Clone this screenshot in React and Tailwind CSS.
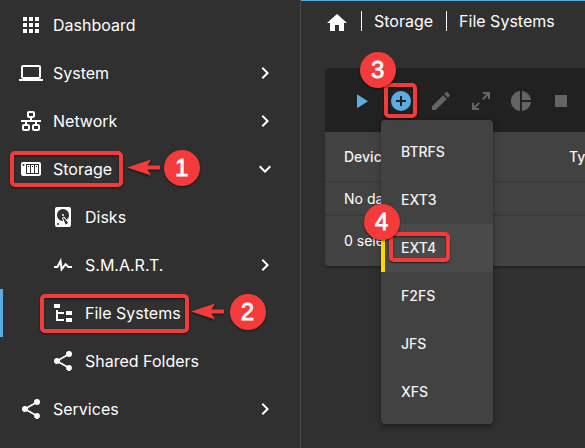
import React from "react";

const paths = {
  apps: "M16,20H20V16H16M16,14H20V10H16M10,8H14V4H10M16,8H20V4H16M10,14H14V10H10M4,14H8V10H4M4,20H8V16H4M10,20H14V16H10M4,8H8V4H4V8Z",
  laptop: "M4,6H20V16H4M20,18A2,2 0 0,0 22,16V6C22,4.89 21.1,4 20,4H4C2.89,4 2,4.89 2,6V16A2,2 0 0,0 4,18H0V20H24V18H20Z",
  lan: "M10,2C8.89,2 8,2.89 8,4V7C8,8.11 8.89,9 10,9H11V11H2V13H6V15H5C3.89,15 3,15.89 3,17V20C3,21.11 3.89,22 5,22H9C10.11,22 11,21.11 11,20V17C11,15.89 10.11,15 9,15H8V13H16V15H15C13.89,15 13,15.89 13,17V20C13,21.11 13.89,22 15,22H19C20.11,22 21,21.11 21,20V17C21,15.89 20.11,15 19,15H18V13H22V11H13V9H14C15.11,9 16,8.11 16,7V4C16,2.89 15.11,2 14,2H10M10,4H14V7H10V4M5,17H9V20H5V17M15,17H19V20H15V17Z",
  nas: "M4,5C2.89,5 2,5.89 2,7V17C2,18.11 2.89,19 4,19H20C21.11,19 22,18.11 22,17V7C22,5.89 21.11,5 20,5H4M4.5,7A1,1 0 0,1 5.5,8A1,1 0 0,1 4.5,9A1,1 0 0,1 3.5,8A1,1 0 0,1 4.5,7M7,7H20V17H7V7M8,8V16H11V8H8M12,8V16H15V8H12M16,8V16H19V8H16M9,9H10V10H9V9M13,9H14V10H13V9M17,9H18V10H17V9Z",
  disk: "M6,2H18A2,2 0 0,1 20,4V20A2,2 0 0,1 18,22H6A2,2 0 0,1 4,20V4A2,2 0 0,1 6,2M12,4A6,6 0 0,0 6,10C6,13.31 8.69,16 12.1,16L11.22,13.77C10.95,13.29 11.11,12.68 11.59,12.4L12.45,11.9C12.93,11.63 13.54,11.79 13.82,12.27L15.74,14.69C17.12,13.59 18,11.9 18,10A6,6 0 0,0 12,4M12,9A1,1 0 0,1 13,10A1,1 0 0,1 12,11A1,1 0 0,1 11,10A1,1 0 0,1 12,9M7,18A1,1 0 0,0 6,19A1,1 0 0,0 7,20A1,1 0 0,0 8,19A1,1 0 0,0 7,18M12.09,13.27L14.58,19.58L17.17,18.08L12.95,12.77L12.09,13.27Z",
  pulse: "M3,13H5.79L10.1,4.79L11.28,13.75L14.5,9.66L17.83,13H21V15H17L14.67,12.67L9.92,18.73L8.94,11.31L7,15H3V13Z",
  tree: "M3,3H9V7H3V3M15,10H21V14H15V10M15,17H21V21H15V17M13,13H7V18H13V20H7L5,20V9H7V11H13V13Z",
  share: "M18,16.08C17.24,16.08 16.56,16.38 16.04,16.85L8.91,12.7C8.96,12.47 9,12.24 9,12C9,11.76 8.96,11.53 8.91,11.3L15.96,7.19C16.5,7.69 17.21,8 18,8A3,3 0 0,0 21,5A3,3 0 0,0 18,2A3,3 0 0,0 15,5C15,5.24 15.04,5.47 15.09,5.7L8.04,9.81C7.5,9.31 6.79,9 6,9A3,3 0 0,0 3,12A3,3 0 0,0 6,15C6.79,15 7.5,14.69 8.04,14.19L15.16,18.34C15.11,18.55 15.08,18.77 15.08,19C15.08,20.61 16.39,21.91 18,21.91C19.61,21.91 20.92,20.61 20.92,19A2.92,2.92 0 0,0 18,16.08Z",
  right: "M8.59,16.58L13.17,12L8.59,7.41L10,6L16,12L10,18L8.59,16.58Z",
  down: "M7.41,8.58L12,13.17L16.59,8.58L18,10L12,16L6,10L7.41,8.58Z",
  home: "M10,20V14H14V20H19V12H22L12,3L2,12H5V20H10Z",
  play: "M8,5.14V19.14L19,12.14L8,5.14Z",
  plus: "M17,13H13V17H11V13H7V11H11V7H13V11H17M12,2A10,10 0 0,0 2,12A10,10 0 0,0 12,22A10,10 0 0,0 22,12A10,10 0 0,0 12,2Z",
  pencil: "M20.71,7.04C21.1,6.65 21.1,6 20.71,5.63L18.37,3.29C18,2.9 17.35,2.9 16.96,3.29L15.12,5.12L18.87,8.87M3,17.25V21H6.75L17.81,9.93L14.06,6.18L3,17.25Z",
  expand: "M10,21V19H6.41L10.91,14.5L9.5,13.09L5,17.59V14H3V21H10M14.5,10.91L19,6.41V10H21V3H14V5H17.59L13.09,9.5L14.5,10.91Z",
  pie: "M11,2V22C5.9,21.5 2,17.2 2,12C2,6.8 5.9,2.5 11,2M13,2V11H22C21.5,6.2 17.8,2.5 13,2M13,13V22C17.7,21.5 21.5,17.8 22,13H13Z",
  stop: "M18,18H6V6H18V18Z",
};

function Icon({ name, className = "" }) {
  return (
    <svg viewBox="0 0 24 24" fill="currentColor" className={`size-6 shrink-0 ${className}`}>
      <path d={paths[name]} />
    </svg>
  );
}

const nav = [
  { label: "Dashboard", icon: "apps" },
  { label: "System", icon: "laptop", chevron: "right" },
  { label: "Network", icon: "lan", chevron: "right" },
  { label: "Storage", icon: "nas", chevron: "down" },
  { label: "Disks", icon: "disk", nested: true },
  { label: "S.M.A.R.T.", icon: "pulse", nested: true, chevron: "right" },
  { label: "File Systems", icon: "tree", nested: true, active: true },
  { label: "Shared Folders", icon: "share", nested: true },
  { label: "Services", icon: "share", chevron: "right" },
];

const tools = [
  { icon: "play", enabled: true },
  { icon: "plus", enabled: true },
  { icon: "pencil" },
  { icon: "expand" },
  { icon: "pie" },
  { icon: "stop" },
];

const formats = ["BTRFS", "EXT3", "EXT4", "F2FS", "JFS", "XFS"];

function Sidebar() {
  return (
    <nav className="w-[301px] shrink-0 border-r border-[#4a4a4a] pt-px">
      {nav.map((item) => (
        <div
          key={item.label}
          className={`flex h-12 items-center border-l-[3px] pr-[23px] ${
            item.nested ? "pl-12" : "pl-4"
          } ${item.active ? "border-[#5dacdf]" : "border-transparent"}`}
        >
          <Icon name={item.icon} />
          <span className="ml-2.5 grow">{item.label}</span>
          {item.chevron && <Icon name={item.chevron} />}
        </div>
      ))}
    </nav>
  );
}

function Menu() {
  return (
    <div className="absolute top-[52px] left-14 w-28 rounded bg-[#424242] py-2 text-sm font-medium text-[#f2f2f2] shadow-[0_2px_4px_-1px_rgba(0,0,0,0.2),0_4px_5px_rgba(0,0,0,0.14),0_1px_10px_rgba(0,0,0,0.12)]">
      {formats.map((f) => (
        <div
          key={f}
          className={`flex h-12 items-center border-l-4 pl-4 ${
            f === "EXT4" ? "border-[#ffd500] bg-[#4a4a4a]" : "border-transparent"
          }`}
        >
          {f}
        </div>
      ))}
    </div>
  );
}

function Badge({ n, className }) {
  return (
    <div
      className={`absolute flex size-9 items-center justify-center rounded-full bg-[#f43b3b] font-['Liberation_Sans',sans-serif] text-2xl shadow-[0_1px_2px_rgba(0,0,0,0.6)] [-webkit-text-stroke:0.8px_white] ${className}`}
    >
      {n}
    </div>
  );
}

function Frame({ className }) {
  return (
    <div
      className={`absolute rounded-[5px] border-4 border-[#f43b3b] shadow-[0_1px_2px_rgba(0,0,0,0.6),inset_0_1px_2px_rgba(0,0,0,0.6)] ${className}`}
    />
  );
}

function Arrow({ className }) {
  return (
    <svg
      viewBox="0 0 33 18"
      className={`absolute h-[18px] w-[33px] drop-shadow-[0_1px_1px_rgba(0,0,0,0.6)] ${className}`}
    >
      <path d="M0 8.5L24 0.5L20.5 6.5H33V10.5H20.5L24 16.5Z" fill="#f43b3b" />
    </svg>
  );
}

export default function App() {
  return (
    <div className="relative flex h-[448px] w-[585px] overflow-hidden bg-[#303030] font-['Inter',sans-serif] text-base text-white">
      <Sidebar />
      <main className="min-w-0 grow overflow-hidden border-t border-[#5dacdf]">
        <header className="flex h-10 items-center pl-6">
          <Icon name="home" className="mt-1" />
          <i className="ml-3 h-5 w-px bg-white" />
          <span className="ml-3">Storage</span>
          <i className="ml-[13px] h-5 w-px bg-white" />
          <span className="ml-3 whitespace-nowrap">File Systems</span>
        </header>
        <section className="relative mt-[27px] ml-6 h-[198px] w-[400px] rounded bg-[#424242] text-sm shadow-[0_2px_2px_rgba(0,0,0,0.25)]">
          <div className="flex h-16 items-center gap-4 rounded-t bg-[#212121] pt-0.5 pl-6">
            {tools.map((t) => (
              <Icon key={t.icon} name={t.icon} className={t.enabled ? "text-[#5dacdf]" : "text-[#646464]"} />
            ))}
          </div>
          <div className="flex h-[50px] items-center border-b border-[#383838] pl-[19px] font-medium text-[#f2f2f2]">
            <span className="w-[225px]">Device</span>
            <span>Type</span>
          </div>
          <div className="flex h-[34px] items-center border-b border-[#383838] pl-[19px]">No data to display</div>
          <div className="flex h-[50px] items-center pl-[19px]">0 selected</div>
          <Menu />
        </section>
      </main>
      <Frame className="top-[151px] left-2.5 h-9 w-[113px]" />
      <Frame className="top-[294px] left-10 h-[39px] w-[149px]" />
      <Frame className="top-[83px] left-96 h-[35px] w-[33px]" />
      <Frame className="top-[232px] left-[389px] h-[30px] w-[61px]" />
      <Arrow className="top-[159px] left-[127px]" />
      <Arrow className="top-[303px] left-[191px]" />
      <Badge n="1" className="top-[150.4px] left-[163.6px]" />
      <Badge n="2" className="top-[294.4px] left-[229.5px]" />
      <Badge n="3" className="top-[52.4px] left-[359.6px]" />
      <Badge n="4" className="top-[203.8px] left-[363.6px]" />
    </div>
  );
}
